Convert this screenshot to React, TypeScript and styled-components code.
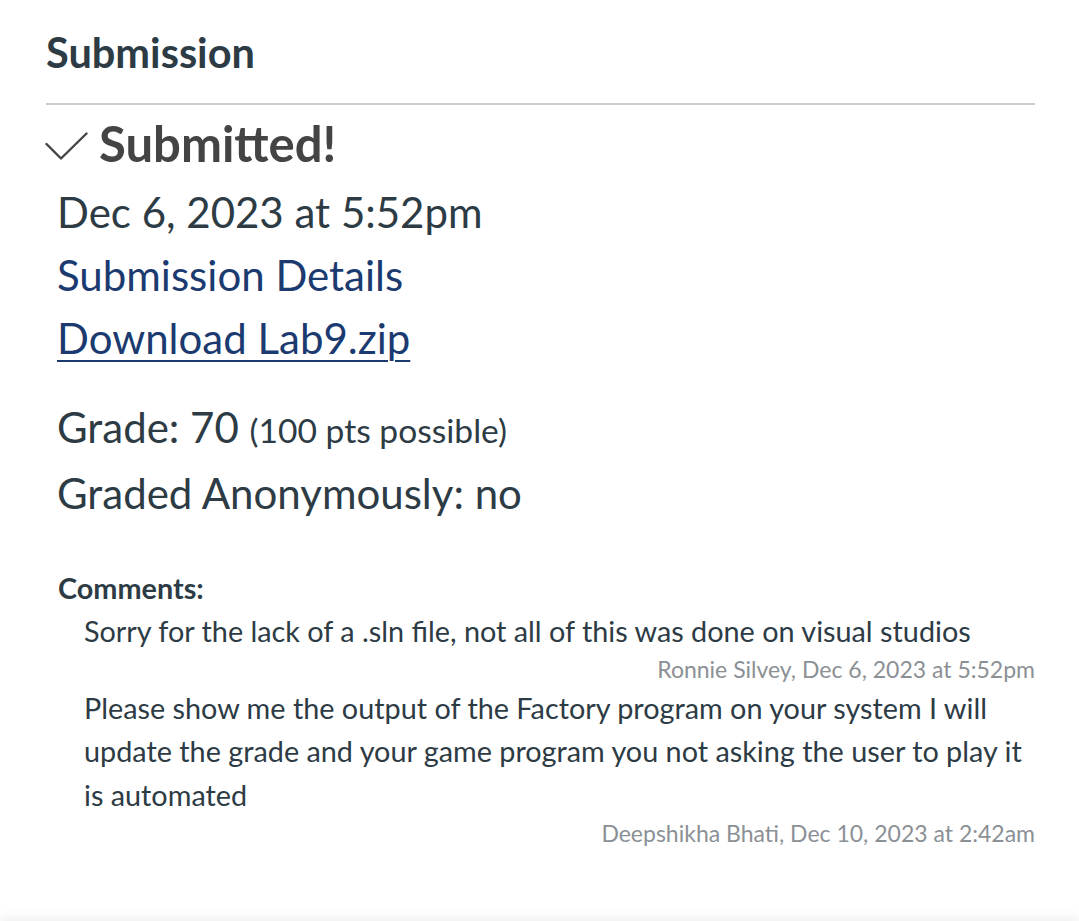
import React from "react";
import styled, { createGlobalStyle } from "styled-components";

const Global = createGlobalStyle`
  html, body { margin: 0; padding: 0; background: #ffffff; }
  body { font-family: Lato, "Noto Sans", "Liberation Sans", sans-serif; color: #2d3b45; }
`;

const Page = styled.main`
  padding: 27px 44px 60px 46px;
`;

const Heading = styled.h2`
  margin: 0;
  font-size: 41.5px;
  line-height: 50px;
  font-weight: 700;
  color: #2d3b45;
`;

const Divider = styled.hr`
  margin: 26px 0 0 0;
  border: 0;
  height: 2px;
  background: #c7cdd1;
`;

const StatusRow = styled.div`
  display: flex;
  align-items: flex-start;
  gap: 11px;
  margin-top: 9px;
`;

const IconBox = styled.span`
  display: flex;
  margin-top: 18px;
  margin-left: -1px;
`;

const StatusText = styled.span`
  font-size: 49px;
  line-height: 58px;
  font-weight: 700;
  color: #444444;
`;

const Details = styled.div`
  padding-left: 11px;
  margin-top: 9px;
  display: flex;
  flex-direction: column;
`;

const Line = styled.div`
  font-size: 42px;
  line-height: 63px;
  color: #2d3b45;
`;

const LinkLine = styled.a<{ $underline?: boolean }>`
  font-size: 42px;
  line-height: 63px;
  color: #1b3a70;
  text-decoration: ${(p) => (p.$underline ? "underline" : "none")};
  text-decoration-thickness: 2px;
  text-underline-offset: 6px;
  align-self: flex-start;
`;

const GradeBlock = styled.div`
  margin-top: 26px;
  display: flex;
  flex-direction: column;
`;

const Small = styled.span`
  font-size: 33.6px;
`;

const Comments = styled.section`
  margin-top: 45px;
`;

const CommentsLabel = styled.div`
  font-size: 28.8px;
  line-height: 36px;
  font-weight: 700;
  color: #2d3b45;
  padding-left: 12px;
`;

const CommentList = styled.div`
  margin-top: 4px;
  padding-left: 38px;
  display: flex;
  flex-direction: column;
`;

const CommentText = styled.p`
  margin: 0;
  font-size: 28.8px;
  line-height: 43.2px;
  color: #2d3b45;
`;

const CommentMeta = styled.div`
  text-align: right;
  font-size: 23px;
  line-height: 32px;
  color: #8b9095;
  margin-bottom: 2px;
`;

const BottomShade = styled.div`
  position: fixed;
  left: 0;
  right: 0;
  bottom: -12px;
  height: 12px;
  box-shadow: 0 -3px 12px rgba(0, 0, 0, 0.07);
  background: #f2f2f2;
`;

const CheckIcon = () => (
  <svg width="43" height="28" viewBox="0 0 43 28" fill="none">
    <path d="M1.5 12 L16 26.5 L41.5 1.5" stroke="#444444" strokeWidth="2.4" strokeLinecap="round" strokeLinejoin="round" />
  </svg>
);

const comments = [
  {
    text: "Sorry for the lack of a .sln file, not all of this was done on visual studios",
    meta: "Ronnie Silvey, Dec 6, 2023 at 5:52pm",
  },
  {
    text: "Please show me the output of the Factory program on your system I will update the grade and your game program you not asking the user to play it is automated",
    meta: "Deepshikha Bhati, Dec 10, 2023 at 2:42am",
  },
];

export default function App() {
  return (
    <>
      <Global />
      <Page>
        <Heading>Submission</Heading>
        <Divider />
        <StatusRow>
          <IconBox>
            <CheckIcon />
          </IconBox>
          <StatusText>Submitted!</StatusText>
        </StatusRow>
        <Details>
          <Line>Dec 6, 2023 at 5:52pm</Line>
          <LinkLine href="#">Submission Details</LinkLine>
          <LinkLine href="#" $underline>Download Lab9.zip</LinkLine>
          <GradeBlock>
            <Line>
              Grade: 70 <Small>(100 pts possible)</Small>
            </Line>
            <Line>Graded Anonymously: no</Line>
          </GradeBlock>
        </Details>
        <Comments>
          <CommentsLabel>Comments:</CommentsLabel>
          <CommentList>
            {comments.map((c) => (
              <React.Fragment key={c.meta}>
                <CommentText>{c.text}</CommentText>
                <CommentMeta>{c.meta}</CommentMeta>
              </React.Fragment>
            ))}
          </CommentList>
        </Comments>
      </Page>
      <BottomShade />
    </>
  );
}
